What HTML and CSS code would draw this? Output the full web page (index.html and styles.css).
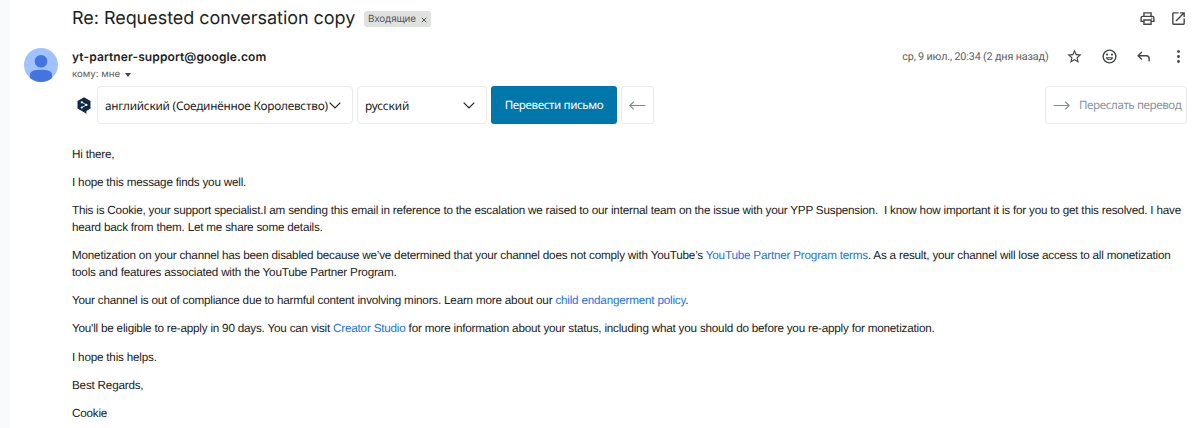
FILE: index.html
```html
<!DOCTYPE html>
<html lang="ru">
<head>
<meta charset="utf-8">
<title>Re: Requested conversation copy</title>
<link rel="stylesheet" href="styles.css">
</head>
<body>
<main class="mail">
  <header class="subject-row">
    <h1 class="subject">Re: Requested conversation copy</h1>
    <span class="label">Входящие <svg class="label-x" viewBox="0 0 6 6"><path d="M.7.7l4.6 4.6M5.3.7L.7 5.3"/></svg></span>
    <div class="subject-tools">
      <svg class="icon" viewBox="0 0 24 24"><path d="M19 8h-1V3H6v5H5c-1.66 0-3 1.34-3 3v6h4v4h12v-4h4v-6c0-1.66-1.34-3-3-3zM8 5h8v3H8V5zm8 12v2H8v-4h8v2zm2-2v-2H6v2H4v-4c0-.55.45-1 1-1h14c.55 0 1 .45 1 1v4h-2z"/><circle cx="18" cy="11.5" r="1"/></svg>
      <svg class="icon" viewBox="0 0 24 24"><path d="M19 19H5V5h7V3H5a2 2 0 0 0-2 2v14a2 2 0 0 0 2 2h14a2 2 0 0 0 2-2v-7h-2v7zM14 3v2h3.59l-9.83 9.83 1.41 1.41L19 6.41V10h2V3h-7z"/></svg>
    </div>
  </header>
  <section class="sender-row">
    <svg class="avatar" viewBox="0 0 34 34"><circle class="avatar-bg" cx="17" cy="17" r="17"/><circle class="avatar-fg" cx="17" cy="13.2" r="6.3"/><path class="avatar-fg" d="M6 26.5C6 23 11 21.8 17 21.8S28 23 28 26.5v3.4A17 17 0 0 1 6 29.9z"/></svg>
    <div class="sender">
      <div class="address">yt-partner-support@google.com</div>
      <div class="recipient">кому: мне <i class="caret"></i></div>
    </div>
    <span class="date">ср, 9 июл., 20:34 (2 дня назад)</span>
    <div class="sender-tools">
      <svg class="icon" viewBox="0 0 24 24"><path d="M22 9.24l-7.19-.62L12 2 9.19 8.63 2 9.24l5.46 4.73L5.82 21 12 17.27 18.18 21l-1.63-7.03L22 9.24zM12 15.4l-3.76 2.27 1-4.28-3.32-2.88 4.38-.38L12 6.1l1.71 4.04 4.38.38-3.32 2.88 1 4.28L12 15.4z"/></svg>
      <svg class="icon" viewBox="0 0 24 24"><path d="M12 2a10 10 0 1 0 0 20 10 10 0 0 0 0-20zm0 18a8 8 0 1 1 0-16 8 8 0 0 1 0 16z"/><circle cx="8.5" cy="9.3" r="1.5"/><circle cx="15.5" cy="9.3" r="1.5"/><path d="M6.7 13h10.6a5.5 5.5 0 0 1-10.6 0zm2.6 1.6a3.7 3.7 0 0 0 5.4 0z" fill-rule="evenodd"/></svg>
      <svg class="icon" viewBox="0 0 24 24"><path d="M19 19v-4a3 3 0 0 0-3-3H6.83l3.59 3.59L9 17l-6-6 6-6 1.41 1.41L6.83 10H16a5 5 0 0 1 5 5v4h-2z"/></svg>
      <svg class="icon" viewBox="0 0 24 24"><circle cx="12" cy="5" r="2"/><circle cx="12" cy="12" r="2"/><circle cx="12" cy="19" r="2"/></svg>
    </div>
  </section>
  <section class="translate">
    <svg class="deepl" viewBox="0 0 14 17"><path class="deepl-bg" d="M7 .2l6.5 3.7v7.6L9.4 13.9v2.8L6.6 15 .5 11.5V3.9z"/><path class="deepl-line" d="M4.7 5.2l4.8 2.7-4.8 2.7"/><circle class="deepl-dot" cx="4.8" cy="5.3" r="1.1"/><circle class="deepl-dot" cx="9.4" cy="7.9" r="1.1"/><circle class="deepl-dot" cx="4.8" cy="10.5" r="1.1"/></svg>
    <div class="select source"><span class="source-text">английский (Соединённое Королевство)</span><svg class="chevron" viewBox="0 0 12 7"><path d="M.7.7L6 6 11.3.7"/></svg></div>
    <div class="select target"><span class="target-text">русский</span><svg class="chevron" viewBox="0 0 12 7"><path d="M.7.7L6 6 11.3.7"/></svg></div>
    <div class="submit"><span>Перевести письмо</span></div>
    <div class="back"><svg class="arrow" viewBox="0 0 17 9"><path d="M16.5 4.5H1M4.7.7L.8 4.5l3.9 3.8"/></svg></div>
    <div class="forward"><svg class="arrow" viewBox="0 0 17 9"><path d="M.5 4.5H16M12.3.7l3.9 3.8-3.9 3.8"/></svg><span class="forward-text">Переслать перевод</span></div>
  </section>
  <article class="body">
    <p>Hi there,</p>
    <p>I hope this message finds you well.</p>
    <p>This is Cookie, your support specialist.I am sending this email in reference to the escalation we raised to our internal team on the issue with your YPP Suspension.&nbsp; I know how important it is for you to get this resolved. I have<br>heard back from them. Let me share some details.</p>
    <p>Monetization on your channel has been disabled because we’ve determined that your channel does not comply with YouTube’s <a>YouTube Partner Program terms</a>. As a result, your channel will lose access to all monetization<br>tools and features associated with the YouTube Partner Program.</p>
    <p>Your channel is out of compliance due to harmful content involving minors. Learn more about our <a>child endangerment policy</a>.</p>
    <p>You'll be eligible to re-apply in 90 days. You can visit <a>Creator Studio</a> for more information about your status, including what you should do before you re-apply for monetization.</p>
    <p>I hope this helps.</p>
    <p>Best Regards,</p>
    <p>Cookie</p>
  </article>
</main>
</body>
</html>
```
FILE: styles.css
```css
* { box-sizing: border-box; }
body { margin: 0; height: 428px; overflow: hidden; background: #f8fafd; font-family: Inter, sans-serif; color: #1f1f1f; text-rendering: geometricPrecision; }
.mail { margin-left: 10px; height: 428px; background: #fff; padding-left: 14px; white-space: nowrap; overflow: hidden; }
.icon { width: 17px; height: 17px; fill: #444746; flex: none; }
.subject-row { display: flex; align-items: center; height: 37px; padding-left: 48px; }
.subject { margin: 0; font-size: 18px; font-weight: 400; line-height: 24px; letter-spacing: -.04px; width: 283px; padding-top: 1px; }
.label { display: flex; align-items: center; justify-content: space-between; width: 67px; height: 16px; margin-left: 9px; padding: 1px 4px 0; border-radius: 3px; background: #e0e2e0; color: #555; font-size: 9.9px; line-height: 15px; letter-spacing: -.15px; }
.label-x { width: 6px; height: 6px; stroke: #555; fill: none; margin-top: 1px; }
.subject-tools { display: flex; gap: 14px; margin-left: auto; padding-right: 13.5px; }
.sender-row { display: flex; height: 49px; }
.avatar { width: 34px; height: 34px; margin: 11px 14px 0 0; flex: none; }
.avatar-bg { fill: #a0c3ff; }
.avatar-fg { fill: #4374e0; }
.address { margin-top: 11px; font-size: 12px; font-weight: 600; line-height: 17px; letter-spacing: .11px; }
.recipient { display: flex; align-items: center; gap: 5px; margin-top: 2px; color: #5e5e5e; font-size: 9.7px; line-height: 16px; }
.caret { border: 3.5px solid transparent; border-top: 4px solid #444746; border-bottom: 0; }
.date { margin-left: auto; margin-top: 11px; font-family: Roboto, sans-serif; font-size: 10.8px; line-height: 17px; letter-spacing: -.16px; color: #5e5e5e; }
.sender-tools { display: flex; gap: 17.5px; margin: 11px 13.5px 0 17.5px; }
.translate { display: flex; align-items: center; height: 38px; margin-right: 13px; padding-left: 53px; font-family: "Noto Sans", sans-serif; font-size: 11.8px; }
.deepl { width: 14px; height: 17px; margin-right: 6px; }
.deepl-bg { fill: #0f2b46; }
.deepl-line { fill: none; stroke: #fff; stroke-width: .8; }
.deepl-dot { fill: #fff; }
.select { display: flex; align-items: center; justify-content: space-between; height: 38px; border: 1px solid #e8eaec; border-radius: 4px; padding: 1px 11px 0 7px; color: #1b1b1b; }
.source { width: 256px; }
.source-text { letter-spacing: -.22px; }
.target { width: 130px; margin-left: 4px; }
.target-text { letter-spacing: -.1px; }
.chevron { width: 12px; height: 7px; fill: none; stroke: #222; stroke-width: 1.2; flex: none; }
.submit { display: flex; align-items: center; justify-content: center; width: 126px; height: 38px; margin-left: 4px; padding-top: 1px; border-radius: 3px; background: #0077ab; color: #fff; font-size: 11.6px; letter-spacing: -.38px; }
.back { display: flex; align-items: center; justify-content: center; width: 33px; height: 38px; margin-left: 4px; border: 1px solid #e8eaec; border-radius: 3px; }
.arrow { width: 17px; height: 9px; fill: none; stroke: #7c8997; stroke-width: 1.1; flex: none; }
.forward { display: flex; align-items: center; gap: 9px; width: 142px; height: 38px; margin-left: auto; border: 1px solid #e8eaec; border-radius: 3px; padding: 1px 0 0 7px; color: #8793a0; font-size: 11.6px; letter-spacing: -.4px; }
.body { padding: 23px 0 0 48px; font-family: "Liberation Sans", Arial, sans-serif; font-size: 11.7px; line-height: 16.87px; letter-spacing: -.205px; color: #222; }
.body p { margin: 0 0 11.25px; }
.body a { color: #1a73e8; }
```
